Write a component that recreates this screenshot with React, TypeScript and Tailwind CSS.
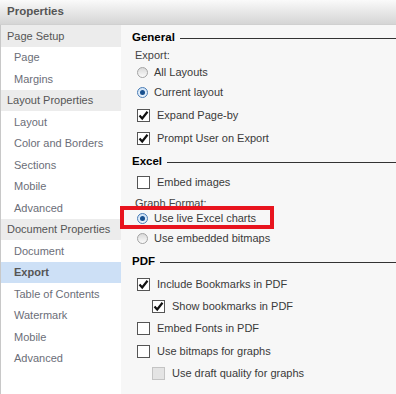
import React from "react";

const font = { fontFamily: '"Liberation Sans", Arial, sans-serif' };

function Radio({ checked }: { checked?: boolean }) {
  return checked ? (
    <span className="relative inline-flex h-[11px] w-[11px] shrink-0 items-center justify-center rounded-full border border-[#4a7cb5] bg-gradient-to-b from-[#cfe3f7] to-[#eaf3fc]">
      <span className="h-[5px] w-[5px] rounded-full bg-[#18508f]" />
    </span>
  ) : (
    <span className="inline-block h-[11px] w-[11px] shrink-0 rounded-full border border-[#a3a3a3] bg-gradient-to-b from-[#d9d9d9] to-[#fbfbfb]" />
  );
}

function Check({ checked, disabled }: { checked?: boolean; disabled?: boolean }) {
  return (
    <span
      className={
        "inline-flex h-[13px] w-[13px] shrink-0 items-center justify-center border " +
        (disabled ? "border-[#c4c4c4] bg-[#e4e4e4]" : "border-[#555] bg-white")
      }
    >
      {checked && (
        <svg width="11" height="11" viewBox="0 0 11 11">
          <path d="M1.5 5.5 L4.2 8.5 L9.5 1.8" fill="none" stroke="#111" strokeWidth="2.2" />
        </svg>
      )}
    </span>
  );
}

function Heading({ text, mt }: { text: string; mt: string }) {
  return (
    <div className={"flex h-[14px] items-center " + mt}>
      <span className="text-[11.5px] font-bold text-black">{text}</span>
      <span className="ml-[5px] h-px flex-1 bg-[#333]" />
    </div>
  );
}

function Label({ text, mt }: { text: string; mt: string }) {
  return (
    <div className={"flex h-[14px] items-center pl-[3px] text-[11px] text-[#444] " + mt}>{text}</div>
  );
}

function RadioRow({ text, checked, mt }: { text: string; checked?: boolean; mt: string }) {
  return (
    <div className={"flex h-[14px] items-center pl-[5px] text-[11px] text-[#3a3a3a] " + mt}>
      <Radio checked={checked} />
      <span className="ml-[6px]">{text}</span>
    </div>
  );
}

function CheckRow({
  text,
  checked,
  disabled,
  indent,
  mt,
}: {
  text: string;
  checked?: boolean;
  disabled?: boolean;
  indent?: boolean;
  mt: string;
}) {
  return (
    <div
      className={
        "flex h-[14px] items-center text-[11px] text-[#3a3a3a] " + (indent ? "pl-[20px] " : "pl-[5px] ") + mt
      }
    >
      <Check checked={checked} disabled={disabled} />
      <span className="ml-[7px]">{text}</span>
    </div>
  );
}

function NavGroup({ text }: { text: string }) {
  return (
    <div className="flex h-[21.5px] items-center bg-[#ececec] pl-[6px] text-[11px] text-[#555]">{text}</div>
  );
}

function NavItem({ text, active }: { text: string; active?: boolean }) {
  return (
    <div
      className={
        "flex h-[21.5px] items-center pl-[13px] text-[11px] " +
        (active ? "bg-[#cde0f6] font-bold text-[#555]" : "text-[#6b6e78]")
      }
    >
      {text}
    </div>
  );
}

export default function App() {
  return (
    <div className="h-[394px] w-[396px] overflow-hidden bg-[#f7f7f7]" style={font}>
      <div className="flex h-[25px] items-center border-b border-[#d0d0d0] bg-gradient-to-b from-[#fafafa] to-[#d5d5d5] pl-[7px] text-[11.5px] font-bold text-[#555]">
        Properties
      </div>
      <div className="flex h-[369px]">
        <div className="w-[121px] shrink-0 border-l border-[#c8c8c8] bg-white">
          <NavGroup text="Page Setup" />
          <NavItem text="Page" />
          <NavItem text="Margins" />
          <NavGroup text="Layout Properties" />
          <NavItem text="Layout" />
          <NavItem text="Color and Borders" />
          <NavItem text="Sections" />
          <NavItem text="Mobile" />
          <NavItem text="Advanced" />
          <NavGroup text="Document Properties" />
          <NavItem text="Document" />
          <NavItem text="Export" active />
          <NavItem text="Table of Contents" />
          <NavItem text="Watermark" />
          <NavItem text="Mobile" />
          <NavItem text="Advanced" />
        </div>
        <div className="relative flex-1 pl-[11px] pt-[6px]">
          <Heading text="General" mt="mt-0" />
          <Label text="Export:" mt="mt-[3px]" />
          <RadioRow text="All Layouts" mt="mt-[3px]" />
          <RadioRow text="Current layout" checked mt="mt-[6px]" />
          <CheckRow text="Expand Page-by" checked mt="mt-[9px]" />
          <CheckRow text="Prompt User on Export" checked mt="mt-[9px]" />
          <Heading text="Excel" mt="mt-[10px]" />
          <CheckRow text="Embed images" mt="mt-[6px]" />
          <Label text="Graph Format:" mt="mt-[7px]" />
          <RadioRow text="Use live Excel charts" checked mt="mt-[1px]" />
          <RadioRow text="Use embedded bitmaps" mt="mt-[6px]" />
          <Heading text="PDF" mt="mt-[10px]" />
          <CheckRow text="Include Bookmarks in PDF" checked mt="mt-[8px]" />
          <CheckRow text="Show bookmarks in PDF" checked indent mt="mt-[8px]" />
          <CheckRow text="Embed Fonts in PDF" mt="mt-[8px]" />
          <CheckRow text="Use bitmaps for graphs" mt="mt-[9px]" />
          <CheckRow text="Use draft quality for graphs" disabled indent mt="mt-[8px]" />
          <div className="absolute left-[-1px] top-[181px] h-[23px] w-[154px] border-[4px] border-[#e8141e]" />
        </div>
      </div>
    </div>
  );
}
